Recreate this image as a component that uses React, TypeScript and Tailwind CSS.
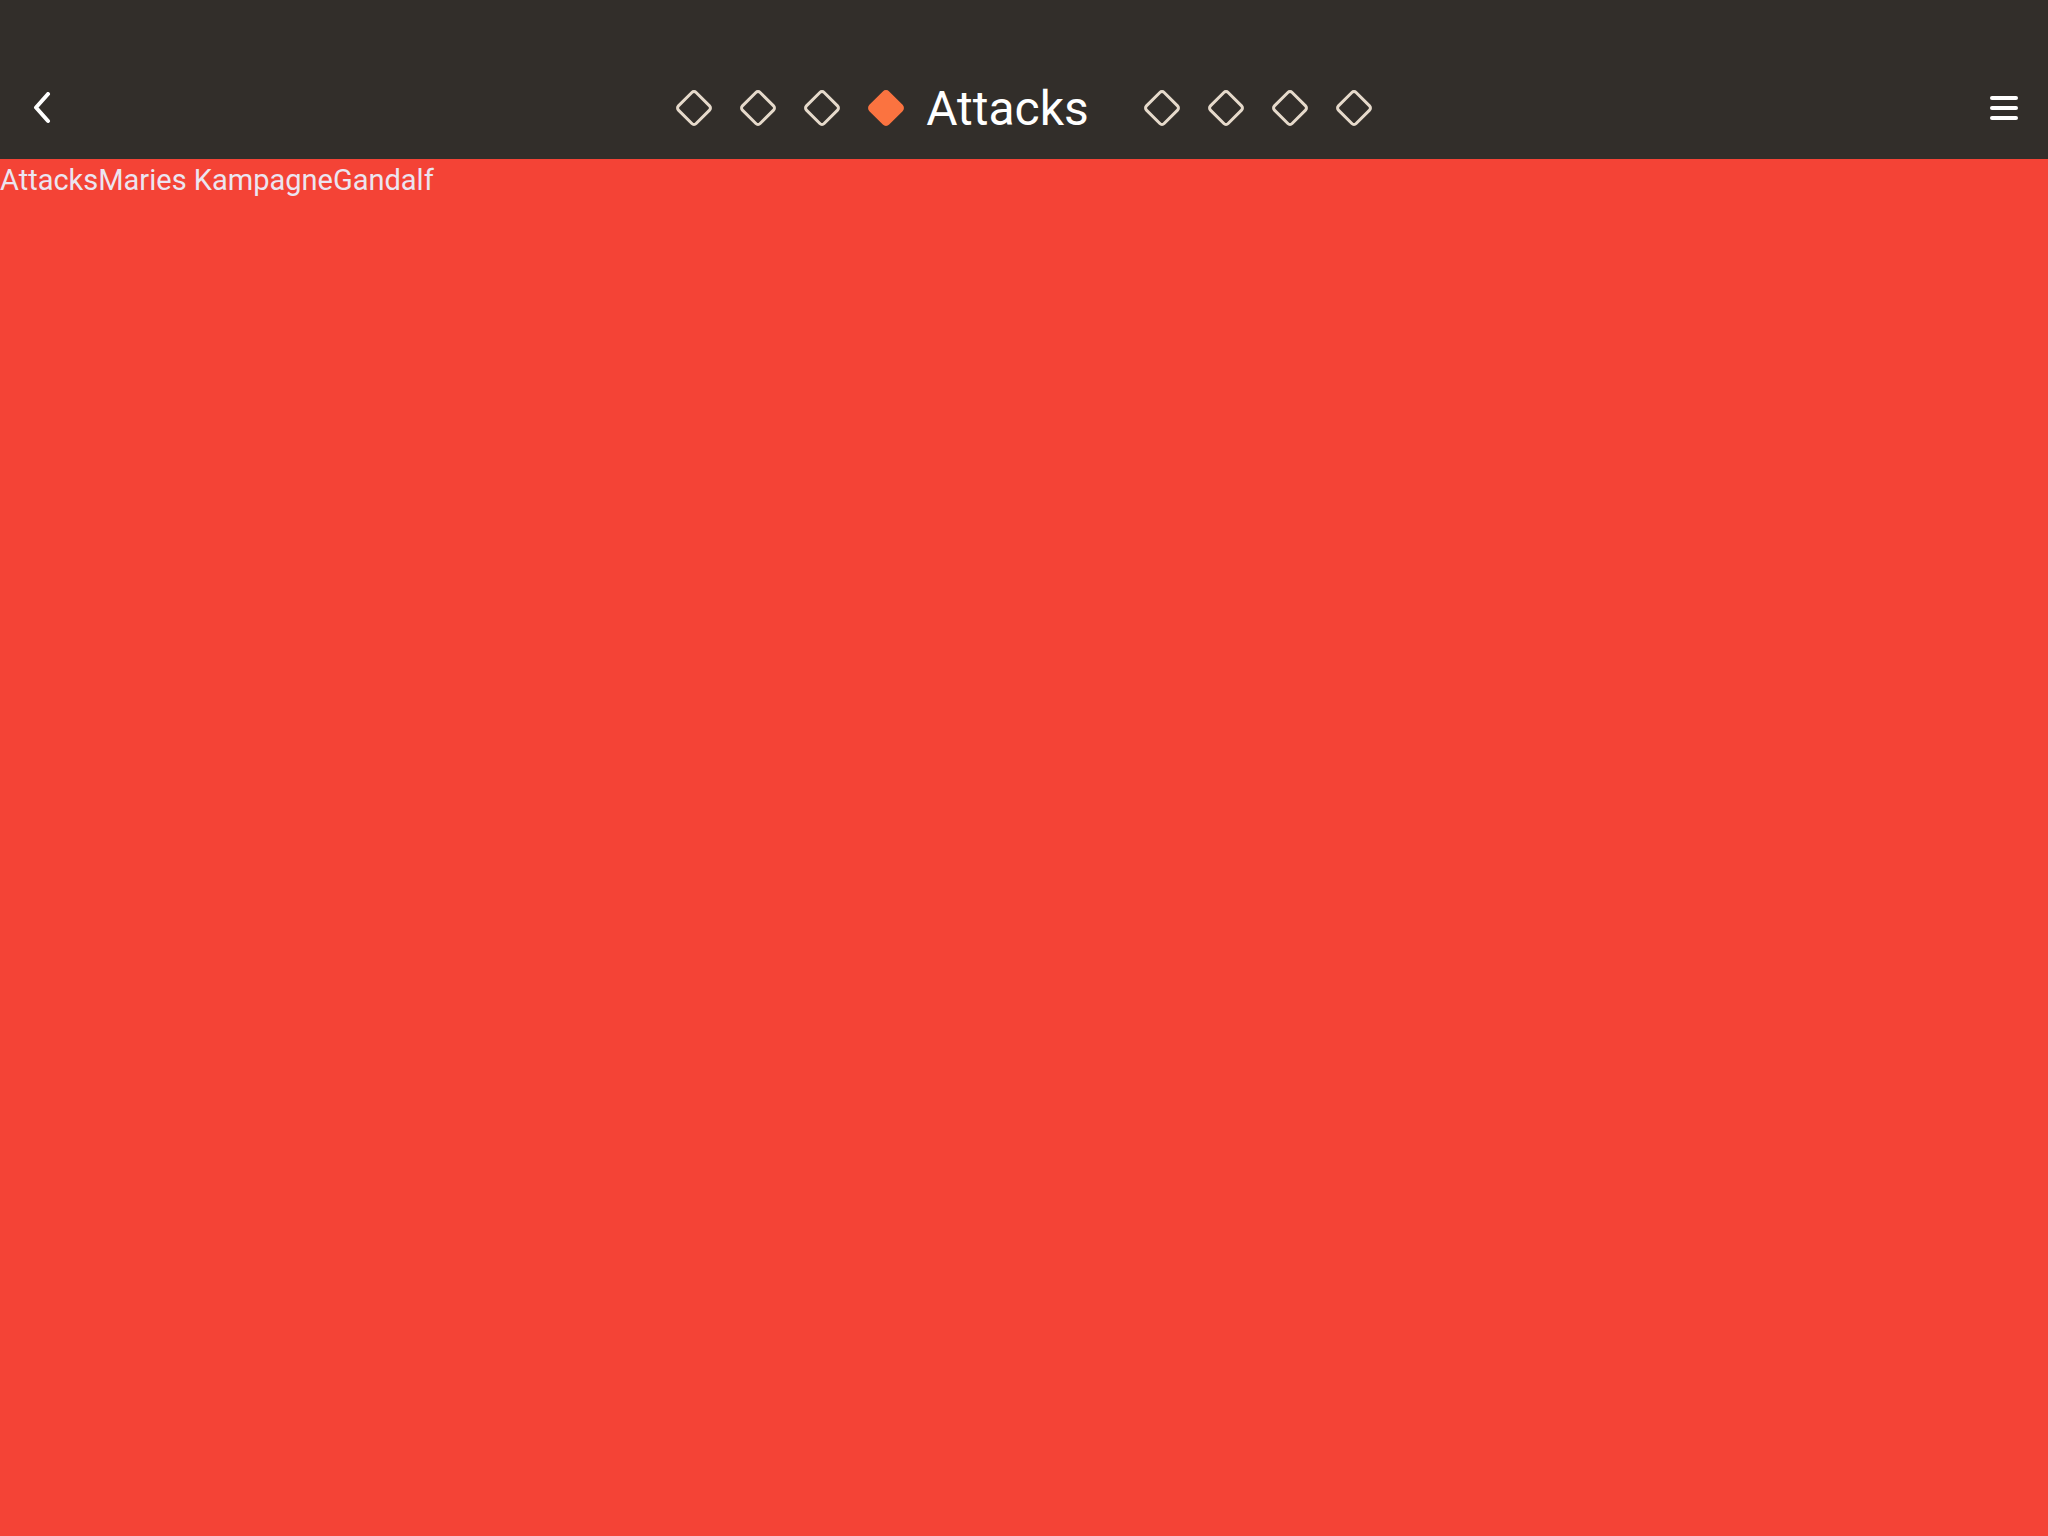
import React from "react";

function Diamond({ active = false }: { active?: boolean }) {
  return (
    <div className="w-[64px] h-[40px] flex items-center justify-center">
      <svg width="40" height="40" viewBox="0 0 40 40">
        <rect
          x="7.5"
          y="7.5"
          width="25"
          height="25"
          rx="3"
          transform="rotate(45 20 20)"
          fill={active ? "#fb7340" : "none"}
          stroke={active ? "#fb7340" : "#e6dacb"}
          strokeWidth="3"
        />
      </svg>
    </div>
  );
}

export default function App() {
  return (
    <div className="min-h-[1536px] w-full bg-[#f44336]" style={{ fontFamily: "Roboto, 'Noto Sans', sans-serif" }}>
      <header className="h-[159px] bg-[#322e2a] pt-[57px]">
        <div className="h-[102px] grid grid-cols-[1fr_auto_1fr] items-center">
          <div className="flex items-center pl-[32px]">
            <svg width="20" height="32" viewBox="0 0 20 32">
              <polyline points="16,2 4,15.5 16,29" fill="none" stroke="#ffffff" strokeWidth="4" strokeLinecap="round" strokeLinejoin="round" />
            </svg>
          </div>
          <div className="flex items-center">
            <Diamond />
            <Diamond />
            <Diamond />
            <Diamond active />
            <span className="ml-[8px] mr-[41px] pt-[2px] text-[48px] leading-none text-white">Attacks</span>
            <Diamond />
            <Diamond />
            <Diamond />
            <Diamond />
          </div>
          <div className="flex items-center justify-end pr-[30px]">
            <div className="flex flex-col gap-[6px]">
              <div className="w-[28px] h-[4px] rounded-full bg-white" />
              <div className="w-[28px] h-[4px] rounded-full bg-white" />
              <div className="w-[28px] h-[4px] rounded-full bg-white" />
            </div>
          </div>
        </div>
      </header>
      <div className="text-[29px] leading-[42px] text-[#ebe5f0]">
        <span>Attacks</span>
        <span>Maries Kampagne</span>
        <span>Gandalf</span>
      </div>
    </div>
  );
}
